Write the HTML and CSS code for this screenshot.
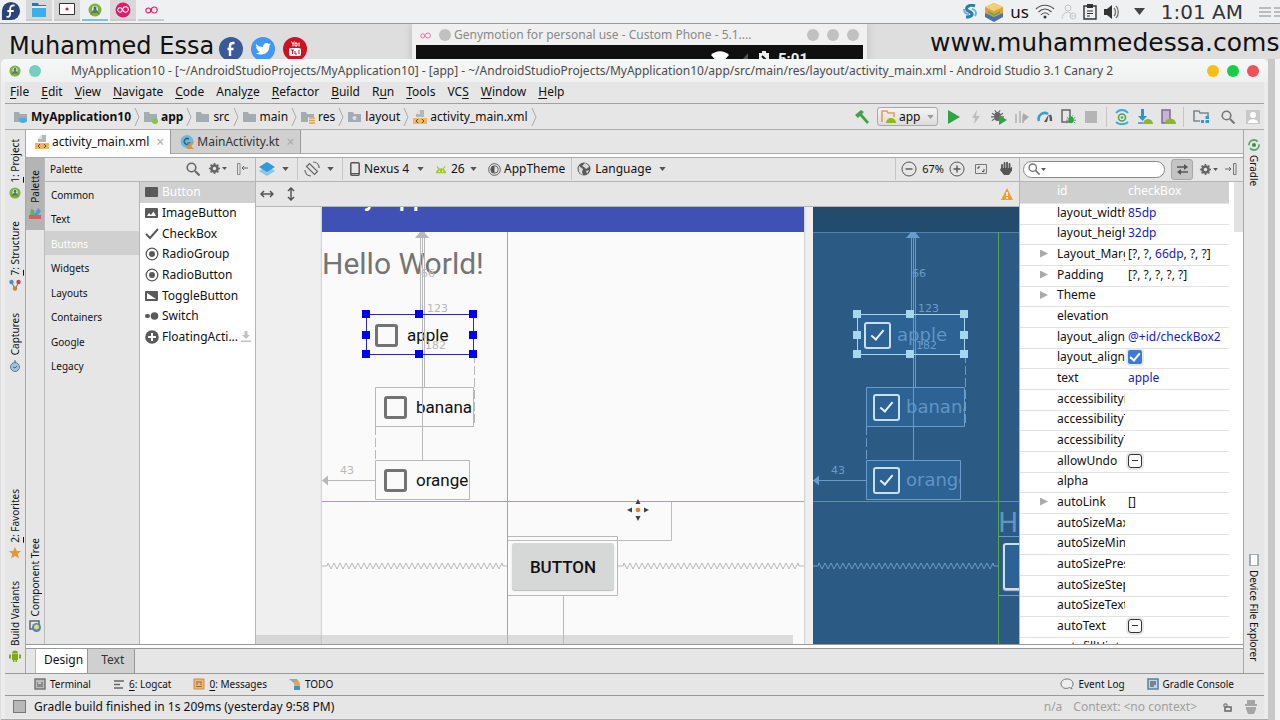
FILE: index.html
```html
<!DOCTYPE html>
<html lang="en">

<head>
  <meta charset="utf-8" />
  <meta name="viewport" content="width=device-width, initial-scale=1.0" />
  <title>MyApplication10 - Android Studio</title>
  <link rel="stylesheet" href="styles.css">
</head>

<body>
  <!-- icon sprite -->
  <svg class="sprite" width="0" height="0">
    <symbol id="i-folder" viewBox="0 0 14 14"><path d="M0 2h5l1 2h7v8H0z" fill="#a3acb3"/></symbol>
    <symbol id="i-xml" viewBox="0 0 14 14"><path d="M3 4l4-4h4v7H3z" fill="#b0b8be"/><path d="M3 4h4V0z" fill="#dfe3e6"/><path d="M0 8h14v6H0z" fill="#efb562"/><path d="M5 9L3 11l2 2M9 9l2 2-2 2" fill="none" stroke="#6b4a1c"/></symbol>
    <symbol id="i-search" viewBox="0 0 14 14"><circle cx="5.500" cy="5.500" r="4.300" fill="none" stroke="currentColor" stroke-width="1.600"/><path d="M9 9l4.500 4.500" stroke="currentColor" stroke-width="2"/></symbol>
    <symbol id="i-gear" viewBox="0 0 14 14"><circle cx="7" cy="7" r="3.400" fill="none" stroke="#666" stroke-width="2.600"/><path d="M7 1v12M1 7h12M2.800 2.800l8.400 8.400M11.200 2.800l-8.400 8.400" stroke="#666" stroke-width="1.800"/><circle cx="7" cy="7" r="1.800" fill="#e8e8e8"/></symbol>
    <symbol id="i-caret" viewBox="0 0 8 5"><path d="M0 0h8L4 5z" fill="currentColor"/></symbol>
    <symbol id="i-robot" viewBox="0 0 14 14"><path d="M1 12a6 6 0 0 1 12 0z" fill="#a4c639"/><path d="M2.500 4l2 3M11.500 4l-2 3" stroke="#a4c639" stroke-width="1.400"/><circle cx="5" cy="9.500" r=".8" fill="#fff"/><circle cx="9" cy="9.500" r=".8" fill="#fff"/></symbol>
    <symbol id="i-studio" viewBox="0 0 14 14"><circle cx="7" cy="7" r="6.500" fill="#7cb342"/><circle cx="7" cy="6" r="3" fill="#dfead0"/><path d="M2 12l4-6h2l4 6-3-2H5z" fill="#5b7d56"/><circle cx="7" cy="5" r="1.500" fill="#4c6b7a"/></symbol>
    <symbol id="i-radio" viewBox="0 0 14 14"><circle cx="7" cy="7" r="5.800" fill="none" stroke="#5a5a5a" stroke-width="1.300"/><circle cx="7" cy="7" r="3" fill="#5a5a5a"/></symbol>
    <symbol id="i-chevron" viewBox="0 0 6 18"><path d="M1 0l4 9-4 9" fill="none" stroke="#aaa"/></symbol>
    <symbol id="i-genymotion" viewBox="0 0 14 8"><circle cx="3.500" cy="4.500" r="2.600" fill="none" stroke="currentColor" stroke-width="1.200"/><circle cx="10" cy="4" r="3.200" fill="none" stroke="currentColor" stroke-width="1.200"/></symbol>
    <symbol id="i-bug" viewBox="0 0 14 14"><ellipse cx="7" cy="7.500" rx="3.600" ry="4.800" fill="currentColor"/><path d="M1 4l3 2M13 4l-3 2M0 8h14M1 12l3-2M13 12l-3-2M4 1l2 2M10 1L8 3" stroke="currentColor" stroke-width="1.200"/></symbol>
    <path id="zig" d="M0 0h5l1-3 3 6 3-6 3 6 3-6 3 6 3-6 3 6 3-6 3 6 3-6 3 6 3-6 3 6 3-6 3 6 3-6 3 6 3-6 3 6 3-6 3 6 3-6 3 6 3-6 3 6 3-6 3 6 3-6 3 6 3-6 3 6 3-6 3 6 3-6 3 6 3-6 3 6 3-6 3 6 3-6 3 6 3-6 3 6 3-6 3 6 3-6 3 6 3-6 3 6 3-6 3 6 3-6 3 6 3-6 3 6 3-6 3 6 3-6 1 3h5" fill="none"/>

    <!-- constraint lines, drawn over both the design and the blueprint -->
    <symbol id="constraints" viewBox="0 0 482 600">
      <g class="wire" fill="none" stroke="currentColor">
        <path d="M98.500 25v82M100.500 25v228M102.500 25v155"/>
        <path d="M53.500 180.500h98v39h-98zM53.500 253.500h94v39h-94z"/>
        <path d="M0 273.500h53M241.500 389v220"/>
        <path d="M152.500 147v72M53.500 219v34" stroke-dasharray="9 3"/>
        <path d="M185.500 329.500h110v59h-110z"/>
        <use href="#zig" x="0" y="359"/>
        <use href="#zig" x="296" y="359"/>
      </g>
      <path d="M93 31l5-6h4l5 6zM0 273.500l6-5v10z" fill="currentColor"/>
      <g class="dims" fill="currentColor">
        <text x="99" y="70">66</text>
        <text x="105" y="105">123</text>
        <text x="103" y="142">182</text>
        <text x="18" y="267">43</text>
      </g>
      <path class="sel-box" d="M44.500 107.500h107v40h-107z" fill="none"/>
      <path class="sel-dots" d="M40 103h8v8h-8zM93 103h8v8h-8zM147 103h8v8h-8zM40 124h8v8h-8zM147 124h8v8h-8zM40 143h8v8h-8zM93 143h8v8h-8zM147 143h8v8h-8z"/>
    </symbol>
  </svg>

  <header class="taskbar">
    <div class="tasks">
      <svg class="start" viewBox="0 0 22 22"><path d="M11 1a10 10 0 1 1 0 20H1V11A10 10 0 0 1 11 1z" fill="#2b4478"/><path d="M15 5c-3-1-5 1-5 4v5c0 3-2 4-4 3M7 11h7" fill="none" stroke="#fff" stroke-width="2"/></svg>
      <span class="task"><svg width="16" height="16" viewBox="0 0 16 16"><path d="M1 1h6l1 2h7v4H1z" fill="#2774b8"/><path d="M1 5h14v10H1z" fill="#3daee9"/><path d="M1 4h14v2H1z" fill="#dfeef8"/></svg></span>
      <span class="task"><svg width="16" height="14" viewBox="0 0 16 14"><path d="M.5.500h15v11H.5z" fill="#fff" stroke="#333"/><circle cx="8" cy="6" r="1.600" fill="#d02050"/></svg></span>
      <span class="task task-on"><svg width="14" height="14"><use href="#i-studio"/></svg></span>
      <span class="task"><svg width="16" height="16" viewBox="0 0 16 16"><circle cx="8" cy="8" r="7.500" fill="#e0196a"/><g color="#fff"><use href="#i-genymotion" x="2" y="4" width="12" height="7"/></g></svg></span>
      <span class="task task-idle"><svg class="pink" width="13" height="8"><use href="#i-genymotion"/></svg></span>
    </div>
    <div class="tray">
      <svg width="16" height="16" viewBox="0 0 16 16"><path d="M13 2C8 0 3 3 5 6c2 2 6 2 5 5-1 2-4 2-6 2" fill="none" stroke="#2a80a8" stroke-width="3"/><path d="M10 5c4 1 5 4 3 7M2 5c0 4 2 5 5 5" fill="none" stroke="#6fb4d4" stroke-width="2"/></svg>
      <svg width="20" height="20" viewBox="0 0 20 20"><path d="M1 5l9-4 9 4v9l-9 5-9-5z" fill="#dba33c"/><path d="M1 5l9 4 9-4-9-4z" fill="#f5cf73"/><path d="M1 11l9 4 9-4v4l-9 5-9-5z" fill="#4a72b0"/><path d="M4 9l6 3 6-3v2l-6 3-6-3z" fill="#69a84f"/></svg>
      <span class="lang">us</span>
      <svg width="20" height="16" viewBox="0 0 20 16"><g fill="none" stroke="#555" stroke-width="1.200"><path d="M1 5c5-5 13-5 18 0M3.500 8c4-4 9-4 13 0M6 11c2-3 6-3 8 0"/></g><circle cx="10" cy="13" r="1.500" fill="#333"/></svg>
      <svg width="16" height="16" viewBox="0 0 16 16"><g fill="none" stroke="#c4c4c4"><circle cx="7" cy="4" r="3"/><path d="M1 15c0-8 8-8 9-5"/><circle cx="12" cy="12" r="3"/><path d="M10 12h4"/></g></svg>
      <svg width="14" height="16" viewBox="0 0 14 16"><path d="M1 2h12v13H1z" fill="none" stroke="#333" stroke-width="1.400"/><path d="M4 0h6v4H4z" fill="#333"/><path d="M4 7h6M4 9.500h6M4 12h3" stroke="#333"/></svg>
      <svg width="17" height="16" viewBox="0 0 17 16"><path d="M1 5h3l5-4v14l-5-4H1z" fill="#333"/><path d="M11 4c2 2 2 6 0 8M13 2c3 3 3 9 0 12" fill="none" stroke="#777" stroke-width="1.400"/></svg>
      <svg class="tray-caret" width="11" height="7"><use href="#i-caret"/></svg>
      <time>1:01 AM</time>
      <svg width="21" height="12" viewBox="0 0 21 12"><path d="M0 2h12M0 6h12M0 10h12M15 2h6M15 6h6M15 10h6" stroke="#888"/></svg>
    </div>
  </header>

  <div class="backdrop">
    <div class="brand">
      <span>Muhammed Essa</span>
      <svg width="24" height="24" viewBox="0 0 24 24"><circle cx="12" cy="12" r="12" fill="#3b5998"/><path d="M15.500 6h-1.500c-2 0-3 1-3 3v10M8.500 12h6" fill="none" stroke="#fff" stroke-width="2.400"/></svg>
      <svg width="24" height="24" viewBox="0 0 24 24"><circle cx="12" cy="12" r="12" fill="#3f97f6"/><path d="M5 7c2 2 4 3 7 3 0-4 4-5 6-3l2-.5-1.500 2c0 6-4 9-8 9-2 0-4-.5-5.500-1.500 2 0 3-.5 4-1.300-1.500-.2-2.500-1-3-2.200h1.300C6 12.800 5 11.500 5 10l1.300.3C5 9.300 4.500 8.300 5 7z" fill="#fff"/></svg>
      <svg width="24" height="24" viewBox="0 0 24 24"><circle cx="12" cy="12" r="12" fill="#cc1420"/><rect x="6" y="11" width="12" height="8" rx="2" fill="#fff"/><path d="M8 13h3M9.500 13v4M12 14v3h2M16 13v4" stroke="#cc1420" fill="none"/><path d="M8.500 4.500L10 7v2.500M11.500 4.500L10 7M12 6h2v3h-2zM16 5.500v4" stroke="#fff" fill="none"/></svg>
    </div>
    <div class="geny">
      <div class="geny-title">
        <svg class="pink" width="11" height="7"><use href="#i-genymotion"/></svg>
        <i class="dot"></i>
        <span>Genymotion for personal use - Custom Phone - 5.1....</span>
        <i class="dot push"></i><i class="dot"></i><i class="dot"></i>
      </div>
      <div class="geny-screen">
        <svg width="18" height="14" viewBox="0 0 18 14"><path d="M0 4c5-5 13-5 18 0l-9 10z" fill="#fff"/></svg>
        <svg width="12" height="14" viewBox="0 0 12 14"><path d="M10 2v12H0z" fill="#555"/></svg>
        <svg width="10" height="14" viewBox="0 0 10 14"><path d="M0 2h3V0h4v2h3v12H0z" fill="#eee"/><path d="M3 5l4 4-4 4" stroke="#111" fill="none" stroke-width="2"/></svg>
        <b>5:01</b>
      </div>
    </div>
    <div class="site">www.muhammedessa.coms</div>
  </div>

  <div class="workspace">
    <main class="ide">
      <div class="titlebar">
        <svg width="12" height="12"><use href="#i-studio"/></svg>
        <i class="dot teal"></i>
        <h1>MyApplication10 - [~/AndroidStudioProjects/MyApplication10] - [app] - ~/AndroidStudioProjects/MyApplication10/app/src/main/res/layout/activity_main.xml - Android Studio 3.1 Canary 2</h1>
        <i class="dot yellow"></i><i class="dot green"></i><i class="dot red"></i>
      </div>

      <div class="ide-body">
        <nav class="menu">
          <span><u>F</u>ile</span><span><u>E</u>dit</span><span><u>V</u>iew</span><span><u>N</u>avigate</span><span><u>C</u>ode</span><span>Analy<u>z</u>e</span><span><u>R</u>efactor</span><span><u>B</u>uild</span><span>R<u>u</u>n</span><span><u>T</u>ools</span><span>VC<u>S</u></span><span><u>W</u>indow</span><span><u>H</u>elp</span>
        </nav>

        <div class="navbar">
          <div class="crumbs">
            <span class="crumb"><svg class="ic" viewBox="0 0 14 14"><use href="#i-folder"/><path d="M4 8h9v2c0 4-8 4-8 0z" fill="#4aaede"/></svg><b>MyApplication10</b><svg class="chev"><use href="#i-chevron"/></svg></span>
            <span class="crumb"><svg class="ic" viewBox="0 0 14 14"><use href="#i-folder"/><circle cx="11" cy="11" r="3" fill="#8bc34a"/></svg><b>app</b><svg class="chev"><use href="#i-chevron"/></svg></span>
            <span class="crumb"><svg class="ic"><use href="#i-folder"/></svg>src<svg class="chev"><use href="#i-chevron"/></svg></span>
            <span class="crumb"><svg class="ic"><use href="#i-folder"/></svg>main<svg class="chev"><use href="#i-chevron"/></svg></span>
            <span class="crumb"><svg class="ic" viewBox="0 0 14 14"><use href="#i-folder"/><path d="M7 7h7v7H7z" fill="#e6e6e6"/><path d="M8 8h6M8 10.500h6M8 13h6" stroke="#e2a33b" stroke-width="1.400"/></svg>res<svg class="chev"><use href="#i-chevron"/></svg></span>
            <span class="crumb"><svg class="ic" viewBox="0 0 14 14"><use href="#i-folder"/><circle cx="6.500" cy="8" r="2" fill="#dde2e6"/></svg>layout<svg class="chev"><use href="#i-chevron"/></svg></span>
            <span class="crumb"><svg class="ic"><use href="#i-xml"/></svg>activity_main.xml<svg class="chev"><use href="#i-chevron"/></svg></span>
          </div>
          <div class="run-tools">
            <button aria-label="Make"><svg viewBox="0 0 16 16"><path d="M1 6l6-5 3 2-2 2 7 8-2 2-7-8-2 2z" fill="#41a344"/></svg></button>
            <label class="combo"><svg width="16" height="14" viewBox="0 0 16 14"><path d="M1 12V1h5l1 2h6v4" fill="none" stroke="#e0a05a" stroke-width="1.600"/><path d="M5 13a5 5 0 0 1 10 0z" fill="#8fb81c"/></svg><select class="sel-app" aria-label="Configuration"><option>app</option></select><svg class="caret soft"><use href="#i-caret"/></svg></label>
            <button aria-label="Run"><svg viewBox="0 0 16 16"><path d="M3 1l12 7-12 7z" fill="#2fa444"/></svg></button>
            <button aria-label="Apply changes"><svg viewBox="0 0 16 16"><path d="M9 1L4 9h3l-1 6 6-8H8z" fill="#bdbdbd"/></svg></button>
            <button aria-label="Debug" class="grey"><svg viewBox="0 0 16 16"><use href="#i-bug" width="13" height="14"/><path d="M8 6l8 5-8 5z" fill="#2fa444"/></svg></button>
            <button aria-label="Attach"><svg viewBox="0 0 16 16"><path d="M1 5h2v9H1zM5 2h2v12H5zM8 6h2v8H8z" fill="#bdbdbd"/><path d="M9 4l6 4-6 5z" fill="#aaa"/></svg></button>
            <button aria-label="Profile"><svg viewBox="0 0 16 16"><path d="M2 12a6 6 0 0 1 9-7" fill="none" stroke="#3a9fcf" stroke-width="2.600"/><path d="M13 6c1 2 1 4 1 6" fill="none" stroke="#555" stroke-width="2.400"/><path d="M7 13l5-8-2 8z" fill="#555"/></svg></button>
            <button aria-label="Attach debugger"><svg viewBox="0 0 16 16"><path d="M2 1h8v12H2z" fill="none" stroke="#666" stroke-width="1.500"/><g color="#2fa444"><use href="#i-bug" x="6" y="5" width="10" height="11"/></g></svg></button>
            <button aria-label="Stop"><svg viewBox="0 0 16 16"><path d="M2 2h12v12H2z" fill="#b5b5b5"/></svg></button>
            <i class="sep"></i>
            <button aria-label="Sync"><svg viewBox="0 0 16 16"><path d="M2 4c3-4 9-4 12 0M2 13c3 3 9 3 12 0" fill="none" stroke="#40a9d4" stroke-width="1.800"/><circle cx="8" cy="8.500" r="3.500" fill="none" stroke="#4fa458" stroke-width="1.600"/><circle cx="8" cy="8.500" r="1.300" fill="#4fa458"/></svg></button>
            <button aria-label="SDK manager"><svg viewBox="0 0 16 16"><path d="M4 0h3v7h3l-4.500 5L1 7h3z" fill="#3592c4"/><path d="M1 14h5" stroke="#3592c4" stroke-width="1.500"/><path d="M6 15a5 5 0 0 1 10 0z" fill="#8fb81c"/></svg></button>
            <button aria-label="AVD manager"><svg viewBox="0 0 16 16"><path d="M2 1h8v13H2z" fill="#c6b3d6" stroke="#7d6b87" stroke-width="1.500"/><path d="M5 15a5 5 0 0 1 11 0z" fill="#8fb81c"/></svg></button>
            <i class="sep"></i>
            <button aria-label="Project structure" class="wide"><svg viewBox="0 0 16 16"><path d="M7 12H1V2h5l1 2h8v3" fill="none" stroke="#7d8890" stroke-width="1.600"/><path d="M8 11h3v3H8zM12.500 11h3.500v3h-3.500zM12.500 7h3.500v3h-3.500z" fill="#2f97dc"/></svg></button>
            <button aria-label="Search" class="wide"><svg viewBox="-1 -1 16 16"><g color="#777"><use href="#i-search" width="14" height="14"/></g></svg></button>
            <button aria-label="Account"><svg viewBox="0 0 16 16"><path d="M1 1h14v14H1z" fill="#c9c9c9"/><circle cx="8" cy="6" r="3" fill="#fff"/><path d="M3 14c0-5 10-5 10 0z" fill="#fff"/></svg></button>
          </div>
        </div>

        <div class="middle">
          <aside class="strip left">
            <div>
              <button><span><u>1</u>: Project</span><svg viewBox="0 0 12 12"><use href="#i-studio"/></svg></button>
              <button><span><u>7</u>: Structure</span><svg viewBox="0 0 12 12"><path d="M2 2l4 8 4-7" fill="none" stroke="#666"/><circle cx="2.500" cy="3" r="2.200" fill="#4c8fc4"/><circle cx="9.500" cy="3" r="2.200" fill="#d0454c"/><circle cx="6" cy="9.500" r="2.200" fill="#b98845"/></svg></button>
              <button><span>Captures</span><svg viewBox="0 0 12 12"><circle cx="6" cy="7" r="4.500" fill="#9cc4e4" stroke="#6b7d8c"/><path d="M6 0v3M4 7l2 1 2-2" stroke="#46657d" fill="none"/></svg></button>
            </div>
            <div>
              <button><span><u>2</u>: Favorites</span><svg viewBox="0 0 12 12"><path d="M6 0l1.800 4H12L8.800 7 10 11.500 6 9l-4 2.500L3.200 7 0 4h4.200z" fill="#e09a3e"/></svg></button>
              <button><span>Build Variants</span><svg viewBox="0 0 12 12"><path d="M3 4h6v6H3zM3 3.500a3 3 0 0 1 6 0zM0 4.500h2v4H0zM10 4.500h2v4h-2zM4 10h1.500v2H4zM6.500 10H8v2H6.500z" fill="#83a819"/></svg></button>
            </div>
          </aside>

          <section class="editor">
            <div class="file-tabs">
              <div class="file-tab current"><svg class="ic"><use href="#i-xml"/></svg>activity_main.xml<span class="x">×</span></div>
              <div class="file-tab"><svg class="ic" viewBox="0 0 14 14"><circle cx="7" cy="6.500" r="6.500" fill="#6cb9dc"/><path d="M9 4a3 3 0 1 0 0 5" fill="none" stroke="#33627a" stroke-width="1.500"/><path d="M7 7h7l-3.500 3.500L14 14H7z" fill="#e98b3a"/><path d="M7 7h4l-4 4z" fill="#3d83c9"/></svg>MainActivity.kt<span class="x">×</span></div>
            </div>

            <div class="designer">
              <aside class="strip inner">
                <button class="pressed"><span>Palette</span><svg viewBox="0 0 12 12"><path d="M0 8h12v4H0z" fill="#d6605a"/><path d="M1 8l1-6 3 1 1 5z" fill="#57b36a"/><path d="M5 8l4-7 3 3-3 4z" fill="#4a9fd0"/></svg></button>
                <button><span>Component Tree</span><svg viewBox="0 0 12 12"><path d="M1 1h9v8H1z" fill="#e6e6e6" stroke="#666" stroke-width="1.500"/><circle cx="7.500" cy="7.500" r="4.500" fill="#4a86bd"/><circle cx="7.500" cy="7" r="2.500" fill="#efd66a"/></svg></button>
              </aside>

              <section class="palette">
                <div class="panel-head">
                  <span class="small">Palette</span>
                  <svg class="ic push grey"><use href="#i-search"/></svg>
                  <span class="gear"><svg width="13" height="13"><use href="#i-gear"/></svg><svg class="tiny"><use href="#i-caret"/></svg></span>
                  <svg class="ic" viewBox="0 0 14 14"><path d="M2.500 1.500h2.500v11H2.500z" fill="none" stroke="#888"/><path d="M13 6H7l2-2M7 6l2 2" fill="none" stroke="#666"/></svg>
                </div>
                <div class="palette-body">
                  <ul class="groups small">
                    <li>Common</li>
                    <li>Text</li>
                    <li class="picked">Buttons</li>
                    <li>Widgets</li>
                    <li>Layouts</li>
                    <li>Containers</li>
                    <li>Google</li>
                    <li>Legacy</li>
                  </ul>
                  <ul class="components">
                    <li class="picked"><svg class="ic" viewBox="0 0 14 14"><rect x="0" y="2" width="13" height="10" rx="1" fill="#5a5a5a"/></svg>Button</li>
                    <li><svg class="ic" viewBox="0 0 14 14"><rect x="0" y="2" width="13" height="10" rx="1" fill="#5a5a5a"/><path d="M2 10l2-3 2 2 2.500-3.500L11 10z" fill="#fff"/></svg>ImageButton</li>
                    <li><svg class="ic" viewBox="0 0 14 14"><path d="M1 7l4 4 8-9" fill="none" stroke="#5a5a5a" stroke-width="2"/></svg>CheckBox</li>
                    <li><svg class="ic"><use href="#i-radio"/></svg>RadioGroup</li>
                    <li><svg class="ic"><use href="#i-radio"/></svg>RadioButton</li>
                    <li><svg class="ic" viewBox="0 0 14 14"><rect x="0" y="2" width="13" height="10" rx="1" fill="#5a5a5a"/><path d="M2 4v6h9z" fill="#fff"/></svg>ToggleButton</li>
                    <li><svg class="ic" viewBox="0 0 14 14"><rect x="0" y="5" width="5" height="4" rx="2" fill="#5a5a5a"/><circle cx="9.500" cy="7" r="3.800" fill="#5a5a5a"/></svg>Switch</li>
                    <li><svg class="ic" viewBox="0 0 14 14"><circle cx="7" cy="7" r="6.800" fill="#5a5a5a"/><path d="M7 3v8M3 7h8" stroke="#fff" stroke-width="2"/></svg>FloatingActi...<svg class="dl" viewBox="0 0 10 12"><path d="M3.500 0h3v4H9L5 8 1 4h2.500zM0 9.500h10V11H0z" fill="#c2c2c2"/></svg></li>
                  </ul>
                </div>
              </section>

              <section class="design">
                <div class="design-bar">
                  <button class="drop-icon" aria-label="Surface"><svg width="16" height="14" viewBox="0 0 16 14"><path d="M8 4l8 5-8 5-8-5z" fill="#8fc4e4"/><path d="M8 0l8 5-8 5-8-5z" fill="#2e9bdb"/></svg><svg class="caret"><use href="#i-caret"/></svg></button>
                  <i class="sep"></i>
                  <button class="drop-icon" aria-label="Orientation"><svg width="16" height="16" viewBox="0 0 16 16"><g fill="none" stroke="#666" stroke-width="1.200"><path d="M2.500 5.500l3-3 8 8-3 3z"/><path d="M1 9c0 3 2 6 6 6M9 1c4 0 6 3 6 6"/></g></svg><svg class="caret"><use href="#i-caret"/></svg></button>
                  <i class="sep"></i>
                  <label class="pick"><svg width="10" height="14" viewBox="0 0 10 14"><rect x=".8" y=".8" width="8.400" height="12.400" rx="1" fill="none" stroke="#555" stroke-width="1.500"/><path d="M1 11.500h8" stroke="#555"/></svg><select class="sel-device" aria-label="Device"><option>Nexus 4</option></select><svg class="caret"><use href="#i-caret"/></svg></label>
                  <label class="pick api"><svg width="12" height="12"><use href="#i-robot"/></svg><select class="sel-api" aria-label="API"><option>26</option></select><svg class="caret"><use href="#i-caret"/></svg></label>
                  <button class="pick theme"><svg width="13" height="13" viewBox="0 0 14 14"><circle cx="7" cy="7" r="6.300" fill="none" stroke="#555"/><path d="M7 3a4 4 0 0 0 0 8z" fill="#555"/><circle cx="7" cy="7" r="4" fill="none" stroke="#555"/></svg>AppTheme</button>
                  <i class="sep"></i>
                  <label class="pick locale"><svg width="14" height="14" viewBox="0 0 14 14"><circle cx="7" cy="7" r="6.500" fill="#5a5a5a"/><path d="M2 4l4 3-1 3 1 3C2 12 1 8 2 4zM8 1c2 1 4 2 4 4l-3 2-2-2-2-1zM9 9l3-1-2 4z" fill="#dadada"/></svg><select class="sel-lang" aria-label="Language"><option>Language</option></select><svg class="caret"><use href="#i-caret"/></svg></label>
                  <div class="zoom">
                    <i class="sep"></i>
                    <svg width="16" height="16" viewBox="0 0 16 16"><circle cx="8" cy="8" r="7" fill="none" stroke="#555"/><path d="M4.500 8h7" stroke="#555" stroke-width="1.400"/></svg>
                    <span>67%</span>
                    <svg width="16" height="16" viewBox="0 0 16 16"><circle cx="8" cy="8" r="7" fill="none" stroke="#555"/><path d="M4.500 8h7M8 4.500v7" stroke="#555" stroke-width="1.400"/></svg>
                    <svg class="fit" width="12" height="12" viewBox="0 0 12 12"><path d="M.5 1.500h11v9H.5z" fill="none" stroke="#777"/><path d="M3 6V4h2M7 8.500h2V6" fill="none" stroke="#444"/></svg>
                    <svg width="14" height="14" viewBox="0 0 14 14"><path d="M3 8V3M5.500 7V1M8 7V.5M10.500 7V2" stroke="#555" stroke-width="1.800" stroke-linecap="round"/><path d="M2 6h9.500l1.500-1.500v4L10 13H5L1 8z" fill="#555"/></svg>
                  </div>
                </div>
                <div class="design-bar second">
                  <svg width="14" height="12" viewBox="0 0 14 12"><path d="M2 6h10M4 3L1 6l3 3M10 3l3 3-3 3" fill="none" stroke="#555" stroke-width="1.500"/></svg>
                  <svg width="12" height="14" viewBox="0 0 12 14"><path d="M6 2v10M3 4l3-3 3 3M3 10l3 3 3-3" fill="none" stroke="#555" stroke-width="1.500"/></svg>
                  <svg class="push" width="12" height="12" viewBox="0 0 12 12"><path d="M6 0l6 12H0z" fill="#eda02f"/><path d="M6 4v4M6 9v2" stroke="#fff" stroke-width="1.500"/></svg>
                </div>

                <div class="surface">
                  <div class="phone">
                    <div class="app-bar"><span>My Application10</span></div>
                    <p class="node hello">Hello World!</p>
                    <label class="node apple"><input type="checkbox">apple</label>
                    <label class="node banana"><input type="checkbox">banana</label>
                    <label class="node orange"><input type="checkbox">orange</label>
                    <button class="node push-button">BUTTON</button>
                    <svg class="wires"><use href="#constraints"/><path d="M186 333.500h163.500V295" fill="none" stroke="#bdbdbd"/><path d="M185.500 25v600M0 294.500h482" fill="none" stroke="#8bc34a"/></svg>
                    <svg class="cursor" viewBox="0 0 22 22"><circle cx="11" cy="11" r="2.300" fill="#e8822a"/><path d="M11 0l2.500 5h-5zM11 22l2.500-5h-5zM0 11l5-2.500v5zM22 11l-5-2.500v5z" fill="#3f3f4c"/></svg>
                  </div>
                  <div class="phone blueprint">
                    <div class="app-bar"></div>
                    <p class="node far">Hello World!</p>
                    <label class="node apple"><input type="checkbox" checked>apple</label>
                    <label class="node banana"><input type="checkbox" checked>banana</label>
                    <label class="node orange"><input type="checkbox" checked>orange</label>
                    <button class="node push-button" aria-label="Button"></button>
                    <svg class="wires"><use href="#constraints"/><path d="M185.500 25v600M0 294.500h482" fill="none" stroke="#5aa548"/></svg>
                  </div>
                  <div class="scroll-x"></div>
                </div>
              </section>

              <section class="props">
                <div class="panel-head">
                  <label class="find"><svg width="12" height="12"><use href="#i-search"/></svg><svg class="tiny"><use href="#i-caret"/></svg><input type="text" aria-label="Search properties"></label>
                  <button class="toggle" aria-label="Toggle view"><svg width="13" height="12" viewBox="0 0 13 12"><path d="M1 4h8M4 9h8" stroke="#555" stroke-width="1.500"/><path d="M8 1l4 3-4 3zM5 6L1 9l4 3z" fill="#555"/></svg></button>
                  <span class="gear"><svg width="13" height="13"><use href="#i-gear"/></svg><svg class="tiny"><use href="#i-caret"/></svg></span>
                  <svg class="ic" viewBox="0 0 14 14"><path d="M9.500 1.500h2.500v11H9.500z" fill="none" stroke="#777"/><path d="M1 7h6L5 5M7 7L5 9" fill="none" stroke="#666"/></svg>
                </div>
                <div class="props-body">
                  <table>
                    <tr class="picked"><th>id</th><td>checkBox</td></tr>
                    <tr><th>layout_width</th><td>85dp</td></tr>
                    <tr><th>layout_height</th><td>32dp</td></tr>
                    <tr class="tree"><th>Layout_Margin</th><td><span>[?, ?, </span>66dp<span>, ?, ?]</span></td></tr>
                    <tr class="tree"><th>Padding</th><td><span>[?, ?, ?, ?, ?]</span></td></tr>
                    <tr class="tree"><th>Theme</th><td></td></tr>
                    <tr><th>elevation</th><td></td></tr>
                    <tr><th>layout_alignEnd</th><td>@+id/checkBox2</td></tr>
                    <tr><th>layout_alignParentTop</th><td><input type="checkbox" checked aria-label="layout_alignParentTop"></td></tr>
                    <tr><th>text</th><td>apple</td></tr>
                    <tr><th>accessibilityLiveRegion</th><td></td></tr>
                    <tr><th>accessibilityTraversalAfter</th><td></td></tr>
                    <tr><th>accessibilityTraversalBefore</th><td></td></tr>
                    <tr><th>allowUndo</th><td><input type="checkbox" class="unset" aria-label="allowUndo"></td></tr>
                    <tr><th>alpha</th><td></td></tr>
                    <tr class="tree"><th>autoLink</th><td><span>[]</span></td></tr>
                    <tr><th>autoSizeMaxTextSize</th><td></td></tr>
                    <tr><th>autoSizeMinTextSize</th><td></td></tr>
                    <tr><th>autoSizePresetSizes</th><td></td></tr>
                    <tr><th>autoSizeStepGranularity</th><td></td></tr>
                    <tr><th>autoSizeTextType</th><td></td></tr>
                    <tr><th>autoText</th><td><input type="checkbox" class="unset" aria-label="autoText"></td></tr>
                    <tr><th>autofillHints</th><td></td></tr>
                  </table>
                  <div class="scroll-y"></div>
                </div>
              </section>
            </div>

            <div class="mode-tabs">
              <button class="current">Design</button><button>Text</button>
            </div>
          </section>

          <aside class="strip right">
            <button><svg viewBox="0 0 12 12"><circle cx="6" cy="6" r="5" fill="none" stroke="#58a866" stroke-width="1.800" stroke-dasharray="12 3"/><circle cx="6" cy="6" r="2" fill="#3b8d4c"/></svg><span>Gradle</span></button>
            <button><svg viewBox="0 0 12 12"><rect x="2" y="0" width="8" height="12" rx="1" fill="#fff" stroke="#8b95a5" stroke-width="1.500"/></svg><span>Device File Explorer</span></button>
          </aside>
        </div>

        <div class="tool-windows small">
          <button><svg viewBox="0 0 12 12"><path d="M1 1h10v10H1z" fill="#bbb" stroke="#777" stroke-width="1.500"/><path d="M3 4h6v5H3z" fill="#8a8a8a"/><path d="M4 5h3" stroke="#fff"/></svg>Terminal</button>
          <button><svg viewBox="0 0 12 12"><path d="M1 3h10M1 6.500h6M1 10h9" stroke="#666" stroke-width="1.500"/></svg><span><u>6</u>: Logcat</span></button>
          <button><svg viewBox="0 0 12 12"><path d="M1 1h10v10H1z" fill="#eeb979" stroke="#c58c4a"/><path d="M3 4h6M3 6h2M7 6h2M3 8.500h6" stroke="#9a6527"/></svg><span><u>0</u>: Messages</span></button>
          <button><svg viewBox="0 0 12 12"><path d="M0 1h8l2 3-4 2z" fill="#9aa7a0"/><circle cx="8" cy="6" r="3" fill="#dca765"/><path d="M5 8h6v4H5z" fill="#4b8fc0"/></svg>TODO</button>
          <button class="push"><svg class="big" viewBox="0 0 14 12"><path d="M12 11L9.500 9.500C5 12 1 9 1 6 1 3 3.500 1 7 1s6 2 6 5c0 2-1 3-1.500 3.500z" fill="#eee" stroke="#777"/></svg>Event Log</button>
          <button><svg viewBox="0 0 12 12"><path d="M1 1h10v10H1z" fill="#b9d6ea" stroke="#5d7f99" stroke-width="1.500"/><path d="M3 4h6M3 6h6M3 8h4" stroke="#333"/></svg>Gradle Console</button>
        </div>

        <footer class="status">
          <i class="box"></i>
          <span>Gradle build finished in 1s 209ms (yesterday 9:58 PM)</span>
          <span class="push dim">n/a</span>
          <span class="dim context">Context: &lt;no context&gt;</span>
          <svg width="9" height="10" viewBox="0 0 9 10"><path d="M2 5h6v4H2z" fill="none" stroke="#666" stroke-width="1.500"/><path d="M1 5V2h3v3" fill="none" stroke="#666"/></svg>
          <svg class="face" width="12" height="14" viewBox="0 0 12 14"><path d="M2 0h8v4h2v2H0V4h2zM1 7h10v2l-2 5H3L1 9z" fill="#a5a5a5"/></svg>
        </footer>
      </div>
    </main>
    <div class="edge"></div>
  </div>
</body>

</html>
```

FILE: styles.css
```css
* {
  box-sizing: border-box;
}

html,
body {
  height: 100%;
}

body {
  margin: 0;
  display: flex;
  flex-direction: column;
  overflow: hidden;
  background: #dedede;
  color: #111;
  font: 12px/16px "Noto Sans", "Open Sans", sans-serif;
}

button,
select,
input {
  font: inherit;
  color: inherit;
  margin: 0;
  padding: 0;
  border: 0;
  background: none;
}

select {
  appearance: none;
}

ul {
  list-style: none;
  margin: 0;
  padding: 0;
}

svg {
  display: block;
  flex: none;
}

u {
  text-underline-offset: 2px;
}

.sprite {
  position: absolute;
}

.small {
  font-size: 10px;
}

.push {
  margin-left: auto;
}

.pink {
  color: #e0196a;
}

.grey {
  color: #666;
}

.ic {
  width: 14px;
  height: 14px;
}

.caret {
  width: 7px;
  height: 4px;
  color: #555;
}

.tiny {
  width: 5px;
  height: 3px;
  color: #555;
}

.sep {
  width: 1px;
  align-self: stretch;
  background: #c6c6c6;
}

.dot {
  width: 12px;
  height: 12px;
  border-radius: 50%;
  background: #c1c1c1;
}

/* desktop panel */
.taskbar {
  flex: none;
  display: flex;
  justify-content: space-between;
  height: 24px;
  background: #eff0f1;
  border-bottom: 1px solid #999;
}

.tasks {
  display: flex;
  gap: 2px;
}

.start {
  width: 20px;
  height: 20px;
  margin: 1px 3px 0 1px;
}

.task {
  display: flex;
  align-items: center;
  justify-content: center;
  width: 26px;
  height: 21px;
  background: #d8d8d8;
  border-bottom: 2px solid #ccc;
}

.task-on {
  background: none;
  border-color: #7cc0e4;
}

.task-idle {
  background: none;
}

.tray {
  display: flex;
  align-items: center;
  gap: 6px;
}

.tray-caret {
  margin: 0 10px 0 8px;
  color: #444;
}

.lang {
  font-size: 17px;
}

.tray time {
  margin-right: 10px;
  font-family: "DejaVu Sans", sans-serif;
  font-size: 20px;
  color: #333;
}

/* windows behind the IDE */
.backdrop {
  flex: none;
  display: grid;
  grid-template-columns: 412px 455px 1fr;
  height: 35px;
  overflow: hidden;
  font-family: "DejaVu Sans", sans-serif;
}

.brand {
  display: flex;
  align-items: center;
  gap: 8px;
  padding: 8px 0 0 9px;
  font-size: 24px;
}

.brand span {
  margin: -6px -3px 0 0;
}

.geny {
  padding: 1px 4px 0;
  background: #f0f0f0;
  box-shadow: 0 0 8px #bbb;
  color: #888;
  font-family: "Noto Sans", sans-serif;
}

.geny-title {
  display: flex;
  align-items: center;
  gap: 8px;
  height: 20px;
  padding: 0 4px;
}

.geny-title .pink {
  opacity: .6;
}

.geny-title span {
  margin-left: -5px;
}

.geny-screen {
  display: flex;
  align-items: flex-start;
  justify-content: flex-end;
  gap: 9px;
  height: 20px;
  padding: 6px 55px 0 0;
  background: #101010;
  color: #eee;
  font: 15px/16px Roboto, sans-serif;
}

.site {
  padding: 5px 0 0 63px;
  font-size: 25px;
  line-height: 28px;
  white-space: nowrap;
}

/* IDE window */
.workspace {
  flex: 1;
  min-height: 0;
  display: flex;
}

.ide {
  flex: 1;
  min-width: 0;
  display: flex;
  flex-direction: column;
  margin-left: 1px;
  padding: 0 4px 1px;
  background: #ececec;
  border-bottom: 1px solid #aaa;
  border-radius: 5px 5px 0 0;
}

.edge {
  width: 12px;
  background: #f4f4f4;
  border-left: 7px solid #c8c8c8;
}

.titlebar {
  flex: none;
  display: flex;
  align-items: center;
  gap: 8px;
  height: 23px;
  margin: 0 -4px;
  padding: 0 9px 0 8px;
  background: linear-gradient(#f6f7f7, #eff0f0);
  border-radius: 5px 5px 0 0;
}

.titlebar h1 {
  flex: 1;
  min-width: 0;
  margin: 0 0 0 22px;
  overflow: hidden;
  white-space: nowrap;
  font-size: 12px;
  font-weight: 400;
  color: #4c4c4c;
}

.teal {
  background: #74cfc0;
}

.yellow {
  background: #fabd12;
}

.green {
  background: #16cf45;
}

.red {
  background: #f05058;
}

.ide-body {
  flex: 1;
  min-height: 0;
  display: flex;
  flex-direction: column;
  background: #e6e6e6;
}

.menu {
  flex: none;
  display: flex;
  align-items: center;
  gap: 12px;
  height: 22px;
  padding: 0 0 1px 5px;
  border-bottom: 1px solid #a0a0a0;
}

.navbar {
  flex: none;
  display: flex;
  align-items: center;
  justify-content: space-between;
  height: 26px;
  padding: 0 3px 0 9px;
  border-bottom: 1px solid #adadad;
}

.crumbs,
.crumb,
.run-tools {
  display: flex;
  align-items: center;
}

.crumb {
  gap: 3px;
}

.chev {
  width: 6px;
  height: 18px;
  margin-right: 4px;
}

.run-tools {
  gap: 7px;
}

.run-tools button svg {
  width: 16px;
  height: 16px;
}

.run-tools .sep {
  height: 20px;
}

.run-tools .wide {
  margin: 0 2px;
}

.combo {
  display: flex;
  align-items: center;
  gap: 2px;
  height: 19px;
  padding: 0 3px;
  border: 1px solid #a8a8a8;
  border-radius: 3px;
  background: linear-gradient(#f4f4f4, #dcdcdc);
}

.soft {
  color: #999;
}

.sel-app {
  width: 26px;
}

/* tool window strips */
.middle {
  flex: 1;
  min-height: 0;
  display: flex;
}

.strip {
  flex: none;
  display: flex;
  flex-direction: column;
  justify-content: space-between;
  width: 21px;
  font-size: 10px;
  line-height: 12px;
}

.strip > div {
  display: flex;
  flex-direction: column;
  gap: 22px;
}

.strip button {
  display: flex;
  flex-direction: column;
  align-items: center;
  gap: 4px;
}

.strip svg {
  width: 12px;
  height: 12px;
}

.strip span {
  writing-mode: vertical-rl;
  transform: rotate(180deg);
}

.left {
  padding: 9px 0 11px;
  border-right: 1px solid #a8a8a8;
}

.inner {
  width: 19px;
  border-right: 1px solid #bbb;
  padding-bottom: 12px;
}

.inner .pressed {
  height: 72px;
  padding-top: 12px;
  background: #b4b4b4;
}

.right {
  padding: 9px 0 12px;
  border-left: 1px solid #a8a8a8;
}

.right span {
  transform: none;
}

.editor {
  flex: 1;
  min-width: 0;
  display: flex;
  flex-direction: column;
}

.file-tabs {
  flex: none;
  display: flex;
  height: 24px;
  border-bottom: 1px solid #aaa;
}

.file-tab {
  display: flex;
  align-items: center;
  gap: 3px;
  padding: 0 6px 0 9px;
  background: #d0d0d0;
  border-right: 1px solid #999;
  color: #333;
}

.file-tab.current {
  margin-bottom: -1px;
  background: #fff;
  color: #111;
}

.x {
  margin-left: 4px;
  font-size: 14px;
  color: #aaa;
}

.designer {
  flex: 1;
  min-height: 0;
  display: flex;
  border-top: 1px solid #aaa;
  border-bottom: 1px solid #999;
  margin: 3px 0;
  box-shadow: 0 0 0 3px #fff;
  clip-path: inset(-3px 0);
}

.panel-head {
  flex: none;
  display: flex;
  align-items: center;
  gap: 8px;
  height: 24px;
  padding: 0 6px 2px 5px;
  border-bottom: 1px solid #b5b5b5;
}

.gear {
  display: flex;
  align-items: center;
  gap: 1px;
}

.palette {
  flex: none;
  display: flex;
  flex-direction: column;
  width: 211px;
  border-right: 1px solid #b5b5b5;
}

.palette-body {
  flex: 1;
  display: flex;
}

.groups {
  width: 95px;
  border-right: 1px solid #b5b5b5;
}

.groups li {
  height: 24px;
  padding: 5px 6px 0;
}

.groups li:nth-child(2n) {
  height: 25px;
}

.components {
  flex: 1;
  background: #fff;
}

/* rows are 62px for every three */
.components li {
  display: flex;
  align-items: center;
  gap: 3px;
  height: 21px;
  padding: 0 0 1px 5px;
}

.components li:nth-child(3n) {
  height: 20px;
}

.picked {
  background: #d0d0d0;
  color: #fff;
}

.dl {
  width: 10px;
  height: 12px;
}

/* design surface */
.design {
  flex: 1;
  min-width: 0;
  display: flex;
  flex-direction: column;
}

.design-bar {
  flex: none;
  display: flex;
  align-items: center;
  height: 24px;
  padding: 0 6px 1px 3px;
  border-bottom: 1px solid #b5b5b5;
}

.design-bar.second {
  height: 25px;
  padding-left: 4px;
  gap: 11px;
}

.drop-icon {
  display: flex;
  align-items: center;
  gap: 7px;
  width: 38px;
}

.design-bar .sep + .drop-icon {
  width: 44px;
  padding-left: 6px;
}

.pick {
  display: flex;
  align-items: center;
  gap: 4px;
  padding: 0 7px;
}

.sel-device {
  width: 49px;
}

.sel-api {
  width: 15px;
}

.sel-lang {
  width: 60px;
}

.api {
  padding-left: 4px;
}

.theme {
  padding: 0 6px 0 4px;
  gap: 3px;
}

.locale {
  padding-left: 5px;
}

.zoom {
  display: flex;
  align-items: center;
  align-self: stretch;
  gap: 5px;
  margin-left: auto;
  font-size: 11px;
}

.zoom .fit {
  margin: 0 7px 0 5px;
}

.surface {
  flex: 1;
  min-height: 0;
  position: relative;
  display: flex;
  gap: 9px;
  padding-left: 66px;
  overflow: hidden;
  background: #efefef;
}

.phone {
  flex: none;
  position: relative;
  width: 482px;
  overflow: hidden;
  background: #fafafa;
  color: #111;
  font-family: Roboto, sans-serif;
  box-shadow: 0 0 2px #999;
}

.app-bar {
  height: 25px;
  background: #3f51b5;
  overflow: hidden;
}

.app-bar span {
  display: block;
  margin: -25px 0 0 20px;
  font-size: 25px;
  line-height: 32px;
  font-weight: 500;
  color: #fff;
}

.node {
  position: absolute;
  display: flex;
  align-items: center;
  gap: 9px;
  margin: 0;
  font-size: 17px;
  white-space: nowrap;
  overflow: hidden;
}

.node input {
  flex: none;
  appearance: none;
  width: 23px;
  height: 23px;
  border: 3px solid #737373;
  border-radius: 3px;
}

.hello {
  left: 0;
  top: 36px;
  font-size: 30px;
  line-height: 42px;
  color: #757575;
}

.apple {
  left: 45px;
  top: 108px;
  width: 107px;
  height: 40px;
  padding-left: 8px;
}

.banana {
  left: 54px;
  top: 180px;
  width: 98px;
  height: 40px;
  padding-left: 8px;
}

.orange {
  left: 54px;
  top: 253px;
  width: 94px;
  height: 40px;
  padding-left: 8px;
}

.push-button {
  justify-content: center;
  left: 190px;
  top: 336px;
  width: 102px;
  height: 47px;
  border-radius: 3px;
  background: #d6d7d7;
  box-shadow: 0 1px 1px #bbb;
  font-weight: 500;
}

.wires {
  position: absolute;
  left: 0;
  top: 0;
  width: 482px;
  height: 600px;
  color: #b8b8b8;
  pointer-events: none;
  --sel: #2a2ab8;
  --dots: #0000f0;
}

.dims {
  font: 11px "DejaVu Sans", sans-serif;
}

.sel-box {
  stroke: var(--sel);
}

.sel-dots {
  fill: var(--dots);
}

.cursor {
  position: absolute;
  left: 305px;
  top: 292px;
  width: 22px;
  height: 22px;
}

.blueprint {
  background: #2b5b84;
  color: #6195c6;
  font-family: "DejaVu Sans", sans-serif;
  box-shadow: none;
}

.blueprint .app-bar {
  height: 26px;
  background: #234b6d;
  border-bottom: 1px solid #5183ae;
}

.blueprint .node {
  font-size: 18px;
  gap: 6px;
}

.blueprint label {
  padding-left: 6px;
  background: #2d6294;
}

.blueprint .node input {
  display: flex;
  width: 27px;
  height: 27px;
  border: 2px solid #c9dff2;
}

.blueprint input::before {
  content: "";
  width: 5px;
  height: 11px;
  margin: 3px 0 0 8px;
  border: solid #e4f0fa;
  border-width: 0 2px 2px 0;
  transform: rotate(40deg);
}

.blueprint .far {
  left: 185px;
  top: 298px;
  font-size: 27px;
  line-height: 36px;
}

.blueprint .push-button {
  background: #2d6294;
  border: 2px solid #c9dff2;
}

.blueprint .wires {
  color: #6a9ccb;
  --sel: #a5d8ee;
  --dots: #a5d8ee;
}

.scroll-x {
  position: absolute;
  left: 0;
  bottom: 0;
  width: 537px;
  height: 9px;
  background: rgba(190, 190, 190, .5);
}

/* properties */
.props {
  flex: none;
  display: flex;
  flex-direction: column;
  width: 224px;
  border-left: 1px solid #b5b5b5;
}

.props .panel-head {
  padding: 0 5px 1px 3px;
  gap: 6px;
}

.find {
  flex: 1;
  min-width: 0;
  display: flex;
  align-items: center;
  gap: 1px;
  height: 17px;
  padding-left: 4px;
  background: #fff;
  border: 1px solid #888;
  border-radius: 9px;
  color: #777;
}

.find input {
  flex: 1;
  width: 0;
  min-width: 0;
  outline: 0;
}

.toggle {
  flex: none;
  display: flex;
  align-items: center;
  justify-content: center;
  width: 22px;
  height: 21px;
  background: #c4c4c4;
  border: 1px solid #a8a8a8;
  border-radius: 3px;
}

.props-body {
  flex: 1;
  min-height: 0;
  display: flex;
  justify-content: space-between;
  overflow: hidden;
  background: #fff;
}

table {
  width: 209px;
  table-layout: fixed;
  border-collapse: collapse;
  height: 0;
}

tr {
  height: 21px;
}

tr:nth-child(3n) {
  height: 20px;
}

th,
td {
  padding: 0 0 2px;
  border-bottom: 1px solid #e2e2e2;
  line-height: 16px;
  font-weight: 400;
  text-align: left;
  white-space: nowrap;
  overflow: hidden;
}

th {
  width: 105px;
  padding-left: 20px;
}

th::before {
  content: "";
  display: inline-block;
  width: 8px;
  height: 8px;
  margin-right: 9px;
}

.tree th::before {
  background: #aaa;
  clip-path: polygon(0 0, 100% 50%, 0 100%);
}

td {
  padding-left: 3px;
  color: #1a1ac0;
}

td span {
  color: #111;
}

.picked td {
  color: #fff;
}

td input {
  appearance: none;
  display: flex;
  align-items: center;
  justify-content: center;
  width: 14px;
  height: 14px;
  border-radius: 2px;
  background: #3d7bd6;
  box-shadow: 0 0 0 2px #e8e8e8;
}

td input::before {
  content: "";
  width: 4px;
  height: 8px;
  margin-bottom: 2px;
  border: solid #fff;
  border-width: 0 2px 2px 0;
  transform: rotate(40deg);
}

td .unset {
  background: #fff;
  border: 1px solid #333;
  border-radius: 3px;
}

td .unset::before {
  width: 6px;
  height: 1px;
  margin: 0;
  border: 0;
  background: #333;
  transform: none;
}

.scroll-y {
  width: 9px;
  height: 50px;
  background: #e2e2e2;
}

/* bottom bars */
.mode-tabs {
  flex: none;
  display: flex;
  height: 25px;
  padding-left: 9px;
  border-top: 1px solid #999;
}

.mode-tabs button {
  padding: 0 10px 2px 13px;
  background: #d0d0d0;
  border-right: 1px solid #999;
  color: #333;
}

.mode-tabs .current {
  padding: 0 4px 2px 8px;
  background: #fff;
  color: #111;
  border-left: 1px solid #bbb;
}

.tool-windows {
  flex: none;
  display: flex;
  align-items: center;
  gap: 22px;
  height: 23px;
  padding: 0 30px 1px 29px;
  border-top: 1px solid #999;
  border-bottom: 1px solid #999;
}

.tool-windows button {
  display: flex;
  align-items: center;
  gap: 4px;
}

.tool-windows svg {
  width: 12px;
  height: 12px;
}

.tool-windows .big {
  width: 14px;
}

.status {
  flex: none;
  display: flex;
  align-items: center;
  height: 22px;
  padding: 0 7px 1px 8px;
}

.box {
  width: 13px;
  height: 13px;
  margin-right: 8px;
  background: #b8b8b8;
  border: 1px solid #777;
}

.dim {
  color: #a0a0a0;
}

.context {
  margin: 0 26px 0 11px;
}

.face {
  margin-left: 13px;
}
```
